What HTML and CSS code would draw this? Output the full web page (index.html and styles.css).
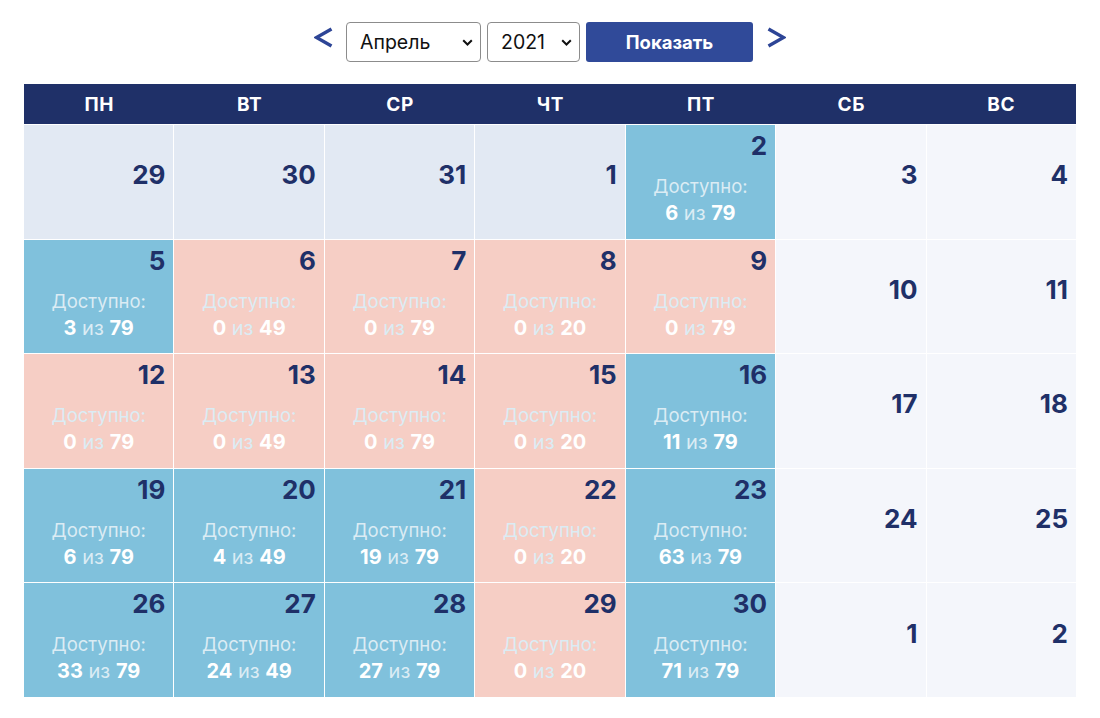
FILE: index.html
```html
<!DOCTYPE html>
<html lang="ru">
<head>
<meta charset="utf-8">
<title>Календарь</title>
<link rel="stylesheet" href="styles.css">
</head>
<body>
<div class="page">
  <div class="controls">
    <a class="arrow" href="#" aria-label="Назад">
      <svg width="19" height="21" viewBox="0 0 19 21"><polyline points="17.5,2 2.5,10.5 17.5,19" fill="none" stroke="#2d4596" stroke-width="3.4" stroke-linejoin="miter"/></svg>
    </a>
    <div class="select-wrap month">
      <select><option>Апрель</option></select>
      <svg class="chev" width="11" height="7" viewBox="0 0 11 7"><polyline points="1.2,1.2 5.5,5.5 9.8,1.2" fill="none" stroke="#111" stroke-width="2"/></svg>
    </div>
    <div class="select-wrap year">
      <select><option>2021</option></select>
      <svg class="chev" width="11" height="7" viewBox="0 0 11 7"><polyline points="1.2,1.2 5.5,5.5 9.8,1.2" fill="none" stroke="#111" stroke-width="2"/></svg>
    </div>
    <button class="show">Показать</button>
    <a class="arrow" href="#" aria-label="Вперёд">
      <svg width="19" height="21" viewBox="0 0 19 21"><polyline points="1.5,2 16.5,10.5 1.5,19" fill="none" stroke="#2d4596" stroke-width="3.4" stroke-linejoin="miter"/></svg>
    </a>
  </div>

  <div class="calendar">
    <div class="head">ПН</div><div class="head">ВТ</div><div class="head">СР</div><div class="head">ЧТ</div><div class="head">ПТ</div><div class="head">СБ</div><div class="head">ВС</div>

    <div class="cell past"><span class="num">29</span></div>
    <div class="cell past"><span class="num">30</span></div>
    <div class="cell past"><span class="num">31</span></div>
    <div class="cell past"><span class="num">1</span></div>
    <div class="cell free"><span class="num">2</span><div class="info"><div class="lbl">Доступно:</div><div class="cnt"><b>6</b> из <b>79</b></div></div></div>
    <div class="cell off"><span class="num">3</span></div>
    <div class="cell off"><span class="num">4</span></div>

    <div class="cell free"><span class="num">5</span><div class="info"><div class="lbl">Доступно:</div><div class="cnt"><b>3</b> из <b>79</b></div></div></div>
    <div class="cell full"><span class="num">6</span><div class="info"><div class="lbl">Доступно:</div><div class="cnt"><b>0</b> из <b>49</b></div></div></div>
    <div class="cell full"><span class="num">7</span><div class="info"><div class="lbl">Доступно:</div><div class="cnt"><b>0</b> из <b>79</b></div></div></div>
    <div class="cell full"><span class="num">8</span><div class="info"><div class="lbl">Доступно:</div><div class="cnt"><b>0</b> из <b>20</b></div></div></div>
    <div class="cell full"><span class="num">9</span><div class="info"><div class="lbl">Доступно:</div><div class="cnt"><b>0</b> из <b>79</b></div></div></div>
    <div class="cell off"><span class="num">10</span></div>
    <div class="cell off"><span class="num">11</span></div>

    <div class="cell full"><span class="num">12</span><div class="info"><div class="lbl">Доступно:</div><div class="cnt"><b>0</b> из <b>79</b></div></div></div>
    <div class="cell full"><span class="num">13</span><div class="info"><div class="lbl">Доступно:</div><div class="cnt"><b>0</b> из <b>49</b></div></div></div>
    <div class="cell full"><span class="num">14</span><div class="info"><div class="lbl">Доступно:</div><div class="cnt"><b>0</b> из <b>79</b></div></div></div>
    <div class="cell full"><span class="num">15</span><div class="info"><div class="lbl">Доступно:</div><div class="cnt"><b>0</b> из <b>20</b></div></div></div>
    <div class="cell free"><span class="num">16</span><div class="info"><div class="lbl">Доступно:</div><div class="cnt"><b>11</b> из <b>79</b></div></div></div>
    <div class="cell off"><span class="num">17</span></div>
    <div class="cell off"><span class="num">18</span></div>

    <div class="cell free"><span class="num">19</span><div class="info"><div class="lbl">Доступно:</div><div class="cnt"><b>6</b> из <b>79</b></div></div></div>
    <div class="cell free"><span class="num">20</span><div class="info"><div class="lbl">Доступно:</div><div class="cnt"><b>4</b> из <b>49</b></div></div></div>
    <div class="cell free"><span class="num">21</span><div class="info"><div class="lbl">Доступно:</div><div class="cnt"><b>19</b> из <b>79</b></div></div></div>
    <div class="cell full"><span class="num">22</span><div class="info"><div class="lbl">Доступно:</div><div class="cnt"><b>0</b> из <b>20</b></div></div></div>
    <div class="cell free"><span class="num">23</span><div class="info"><div class="lbl">Доступно:</div><div class="cnt"><b>63</b> из <b>79</b></div></div></div>
    <div class="cell off"><span class="num">24</span></div>
    <div class="cell off"><span class="num">25</span></div>

    <div class="cell free"><span class="num">26</span><div class="info"><div class="lbl">Доступно:</div><div class="cnt"><b>33</b> из <b>79</b></div></div></div>
    <div class="cell free"><span class="num">27</span><div class="info"><div class="lbl">Доступно:</div><div class="cnt"><b>24</b> из <b>49</b></div></div></div>
    <div class="cell free"><span class="num">28</span><div class="info"><div class="lbl">Доступно:</div><div class="cnt"><b>27</b> из <b>79</b></div></div></div>
    <div class="cell full"><span class="num">29</span><div class="info"><div class="lbl">Доступно:</div><div class="cnt"><b>0</b> из <b>20</b></div></div></div>
    <div class="cell free"><span class="num">30</span><div class="info"><div class="lbl">Доступно:</div><div class="cnt"><b>71</b> из <b>79</b></div></div></div>
    <div class="cell off"><span class="num">1</span></div>
    <div class="cell off"><span class="num">2</span></div>
  </div>
</div>
</body>
</html>
```
FILE: styles.css
```css
* { box-sizing: border-box; }
html, body { margin: 0; padding: 0; background: #ffffff; }
body { font-family: Inter, "Open Sans", "Liberation Sans", sans-serif; color: #1f3068; }

.page { padding: 22px 24px 0; }

.controls {
  display: flex;
  justify-content: center;
  align-items: center;
  height: 40px;
}
.arrow { display: flex; align-items: center; height: 40px; text-decoration: none; }
.arrow:first-child { margin-right: 13px; margin-top: -10px; }
.arrow:last-child { margin-left: 14px; margin-top: -10px; }

.select-wrap { position: relative; height: 40px; }
.select-wrap.month { width: 135px; }
.select-wrap.year { width: 93px; margin-left: 6px; }
.select-wrap select {
  appearance: none;
  -webkit-appearance: none;
  width: 100%;
  height: 40px;
  border: 1px solid #8c8c8c;
  border-radius: 4px;
  background: #ffffff;
  color: #111111;
  font-family: Inter, "Open Sans", sans-serif;
  font-size: 19.5px;
  padding: 0 0 0 13px;
  margin: 0;
}
.chev { position: absolute; right: 8px; top: 17px; pointer-events: none; }

.show {
  margin-left: 6px;
  width: 167px;
  height: 40px;
  border: none;
  border-radius: 3px;
  background: #304a99;
  color: #ffffff;
  font-family: Inter, "Open Sans", sans-serif;
  font-weight: 700;
  font-size: 18.5px;
  padding: 0;
}

.calendar {
  margin-top: 22px;
  display: grid;
  grid-template-columns: repeat(7, 1fr);
  grid-template-rows: 40px repeat(5, 113.6px);
  column-gap: 1px;
  row-gap: 1px;
  background: #ffffff;
}
.head {
  background: #1f3068;
  color: #ffffff;
  font-weight: 700;
  font-size: 19px;
  display: flex;
  align-items: center;
  justify-content: center;
  letter-spacing: 0.6px;
}
.calendar .head { margin-right: -1px; }
.calendar .head:nth-child(7) { margin-right: 0; }

.cell {
  display: flex;
  flex-direction: column;
  padding: 6px 8px 0;
}
.cell .num {
  display: block;
  text-align: right;
  font-weight: 700;
  font-size: 26px;
  line-height: 30px;
  color: #1f3068;
}
.past, .off { justify-content: center; padding-bottom: 13px; padding-top: 0; }
.past { background: #e2e9f3; }
.off { background: #f4f6fb; }
.free { background: #80c1dc; }
.full { background: #f6cec5; }

.info {
  margin-top: 12px;
  text-align: center;
  font-size: 18.5px;
  line-height: 27px;
  color: #dbecf4;
}
.cnt { font-size: 20px; }
.cnt b { color: #ffffff; font-weight: 700; }
```
